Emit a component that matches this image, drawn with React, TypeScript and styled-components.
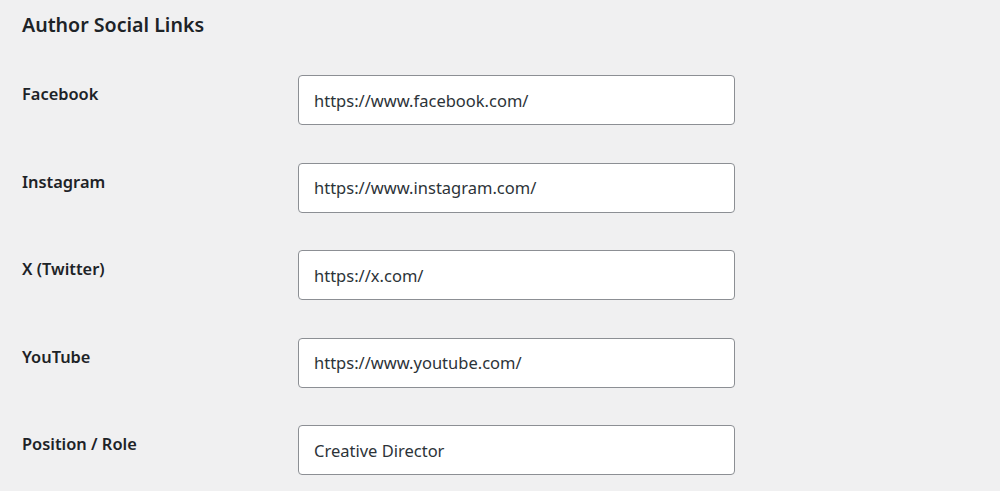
import { Fragment } from "react";
import styled, { createGlobalStyle } from "styled-components";

const GlobalStyle = createGlobalStyle`
  html, body {
    margin: 0;
    padding: 0;
    background: #f0f0f1;
  }
  body {
    font-family: "Noto Sans", "Open Sans", sans-serif;
    color: #1d2327;
  }
`;

const Wrap = styled.div`
  padding: 0 22px;
`;

const Heading = styled.h2`
  margin: 0;
  padding-top: 11px;
  height: 45px;
  font-size: 19.6px;
  line-height: 28px;
  font-weight: 600;
  color: #1d2327;
`;

const FormTable = styled.div`
  display: grid;
  grid-template-columns: 276px 437px;
  grid-auto-rows: 87.5px;
`;

const Label = styled.label`
  padding-top: 27px;
  font-size: 16.4px;
  line-height: 22px;
  font-weight: 600;
  color: #1d2327;
`;

const Cell = styled.div`
  padding-top: 19px;
`;

const Input = styled.input`
  box-sizing: border-box;
  width: 437px;
  height: 50px;
  margin: 0;
  padding: 0 15px;
  border: 1px solid #8c8f94;
  border-radius: 4px;
  background: #fff;
  font-family: inherit;
  font-size: 16.5px;
  color: #2c3338;
  outline: none;
`;

interface IField {
  id: string;
  label: string;
  value: string;
}

const fields: IField[] = [
  { id: "facebook", label: "Facebook", value: "https://www.facebook.com/" },
  { id: "instagram", label: "Instagram", value: "https://www.instagram.com/" },
  { id: "twitter", label: "X (Twitter)", value: "https://x.com/" },
  { id: "youtube", label: "YouTube", value: "https://www.youtube.com/" },
  { id: "position", label: "Position / Role", value: "Creative Director" },
];

function App() {
  return (
    <>
      <GlobalStyle />
      <Wrap>
        <Heading>Author Social Links</Heading>
        <FormTable>
          {fields.map((f) => (
            <Fragment key={f.id}>
              <Label htmlFor={f.id}>{f.label}</Label>
              <Cell>
                <Input id={f.id} type="text" defaultValue={f.value} />
              </Cell>
            </Fragment>
          ))}
        </FormTable>
      </Wrap>
    </>
  );
}

export default App;
